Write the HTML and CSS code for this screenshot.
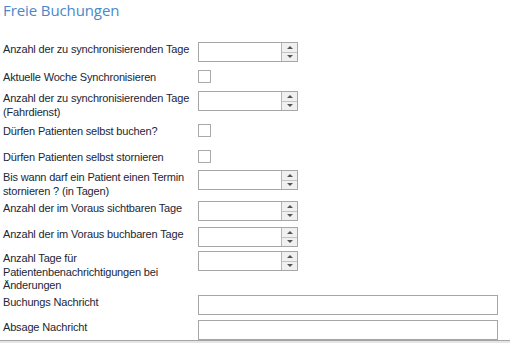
FILE: index.html
```html
<!DOCTYPE html>
<html lang="de">
<head>
<meta charset="utf-8">
<title>Freie Buchungen</title>
<link rel="stylesheet" href="styles.css">
</head>
<body>
<div class="panel">
  <h1 class="title">Freie Buchungen</h1>
  <div class="form">
    <label class="label">Anzahl der zu synchronisierenden Tage</label>
    <div class="spin"><span class="spin-field"></span><span class="spin-btns"><span class="btn up"></span><span class="btn down"></span></span></div>

    <label class="label">Aktuelle Woche Synchronisieren</label>
    <span class="check"></span>

    <label class="label">Anzahl der zu synchronisierenden Tage (Fahrdienst)</label>
    <div class="spin"><span class="spin-field"></span><span class="spin-btns"><span class="btn up"></span><span class="btn down"></span></span></div>

    <label class="label">Dürfen Patienten selbst buchen?</label>
    <span class="check"></span>

    <label class="label">Dürfen Patienten selbst stornieren</label>
    <span class="check"></span>

    <label class="label">Bis wann darf ein Patient einen Termin stornieren ? (in Tagen)</label>
    <div class="spin"><span class="spin-field"></span><span class="spin-btns"><span class="btn up"></span><span class="btn down"></span></span></div>

    <label class="label">Anzahl der im Voraus sichtbaren Tage</label>
    <div class="spin"><span class="spin-field"></span><span class="spin-btns"><span class="btn up"></span><span class="btn down"></span></span></div>

    <label class="label">Anzahl der im Voraus buchbaren Tage</label>
    <div class="spin"><span class="spin-field"></span><span class="spin-btns"><span class="btn up"></span><span class="btn down"></span></span></div>

    <label class="label">Anzahl Tage für Patientenbenachrichtigungen bei Änderungen</label>
    <div class="spin"><span class="spin-field"></span><span class="spin-btns"><span class="btn up"></span><span class="btn down"></span></span></div>

    <label class="label">Buchungs Nachricht</label>
    <span class="text"></span>

    <label class="label">Absage Nachricht</label>
    <span class="text"></span>
  </div>
</div>
</body>
</html>
```

FILE: styles.css
```css
* { box-sizing: border-box; }

html, body {
  margin: 0;
  padding: 0;
  background: #e6e6e6;
}

.panel {
  height: 341px;
  overflow: hidden;
  background: #ffffff;
  border-bottom: 1px solid #a4a4a4;
  padding-left: 3px;
}

.title {
  margin: 0;
  font-family: "Open Sans", "Noto Sans", sans-serif;
  font-weight: 400;
  font-size: 15px;
  line-height: 21px;
  color: #4a87c9;
  letter-spacing: -0.1px;
}

.form {
  margin-top: 21px;
  display: grid;
  grid-template-columns: 190px 300px;
  grid-template-rows: 28px 21px 33px 26px 20px 31px 26px 24px 44px 25px 25px;
  column-gap: 5px;
  align-items: start;
  font-family: "Liberation Sans", Arial, sans-serif;
  font-size: 11px;
  letter-spacing: -0.17px;
  line-height: 13.5px;
  color: #1c2636;
}

.label {
  display: block;
  padding-top: 1px;
}

.spin {
  display: flex;
  width: 100px;
  height: 20px;
  border: 1px solid #a6a6a6;
  background: #fff;
}

.spin-field {
  flex: 1;
}

.spin-btns {
  width: 16px;
  display: flex;
  flex-direction: column;
  border-left: 1px solid #b4b4b4;
}

.btn {
  flex: 1;
  background: #f0f0f0;
  display: flex;
  align-items: center;
  justify-content: center;
}

.btn.up {
  border-bottom: 1px solid #c4c4c4;
}

.btn.up::before {
  content: "";
  border-left: 3px solid transparent;
  border-right: 3px solid transparent;
  border-bottom: 3px solid #555;
}

.btn.down::before {
  content: "";
  border-left: 3px solid transparent;
  border-right: 3px solid transparent;
  border-top: 3px solid #555;
}

.check {
  display: block;
  width: 13px;
  height: 13px;
  border: 1px solid #a9a9a9;
  background: #fff;
}

.text {
  display: block;
  width: 300px;
  height: 20px;
  border: 1px solid #a6a6a6;
  background: #fff;
}
```
